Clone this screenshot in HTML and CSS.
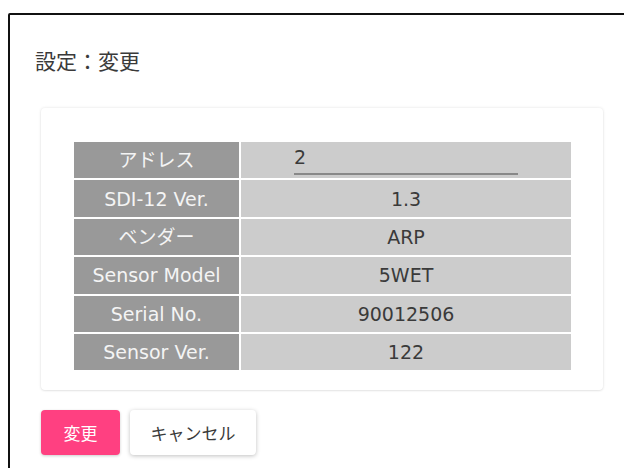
FILE: index.html
```html
<!DOCTYPE html>
<html lang="ja">
<head>
<meta charset="utf-8">
<link rel="stylesheet" href="styles.css">
</head>
<body>
<div class="dialog">
  <h2 class="title">設定：変更</h2>
  <div class="content">
    <div class="card">
      <table class="info">
        <tr><th>アドレス</th><td><div class="field"><span class="field-value">2</span></div></td></tr>
        <tr><th>SDI-12 Ver.</th><td>1.3</td></tr>
        <tr><th>ベンダー</th><td>ARP</td></tr>
        <tr><th>Sensor Model</th><td>5WET</td></tr>
        <tr><th>Serial No.</th><td>90012506</td></tr>
        <tr><th>Sensor Ver.</th><td>122</td></tr>
      </table>
    </div>
    <div class="actions">
      <button class="btn btn-primary">変更</button>
      <button class="btn btn-default">キャンセル</button>
    </div>
  </div>
</div>
</body>
</html>
```
FILE: styles.css
```css
html, body {
  margin: 0;
  padding: 0;
  background: #fff;
  overflow: hidden;
  font-family: "DejaVu Sans", "Noto Sans CJK JP", sans-serif;
}
.dialog {
  margin: 13px 0 0 8px;
  width: 660px;
  height: 520px;
  border: 2px solid #111;
  border-radius: 2px 0 0 0;
  box-sizing: border-box;
  padding: 0 0 0 25px;
  background: #fff;
}
.title {
  margin: 0;
  padding-top: 31px;
  height: 58px;
  box-sizing: border-box;
  font-size: 21px;
  line-height: 28px;
  font-weight: 400;
  color: #3a3a3a;
  font-family: "Noto Sans CJK JP", sans-serif;
}
.content {
  margin-top: 35px;
  padding-left: 6px;
}
.card {
  width: 562px;
  box-sizing: border-box;
  padding: 32px 0 18px 31px;
  border-radius: 4px;
  box-shadow: 0 0 3px rgba(0,0,0,0.12), 0 1px 2px rgba(0,0,0,0.06);
}
.info {
  border-collapse: collapse;
  font-size: 19px;
}
.info th, .info td {
  border: 2px solid #fff;
  height: 36.4px;
  padding: 0;
  text-align: center;
  font-weight: 400;
  line-height: 22px;
}
.info th {
  width: 165px;
  background: #999;
  color: #f4f4f4;
}
.info td {
  width: 330px;
  background: #ccc;
  color: #3a3a3a;
}
.field {
  width: 224px;
  margin: 0 auto;
  text-align: left;
  border-bottom: 2px solid #888;
  height: 32px;
  box-sizing: border-box;
  margin-top: -2px;
}
.field-value {
  display: block;
  padding-top: 3px;
  font-size: 19px;
}
.actions {
  display: flex;
  gap: 10px;
  margin-top: 20px;
}
.btn {
  height: 45px;
  border: none;
  border-radius: 4px;
  font-family: "Noto Sans CJK JP", sans-serif;
  font-size: 17px;
  padding: 0;
}
.btn-primary {
  width: 79px;
  background: #ff4081;
  color: #fff;
  box-shadow: 0 1px 3px rgba(0,0,0,0.2);
}
.btn-default {
  width: 126px;
  background: #fff;
  color: #3a3a3a;
  box-shadow: 0 1px 4px rgba(0,0,0,0.25);
}
```
